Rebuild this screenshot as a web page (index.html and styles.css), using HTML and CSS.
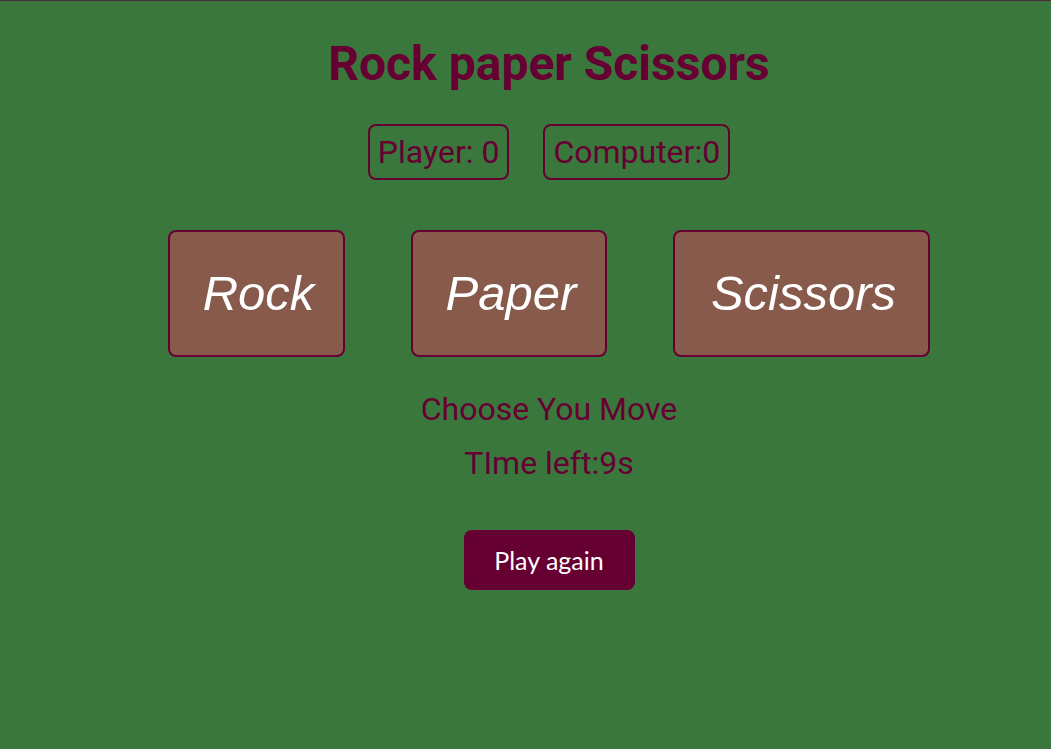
FILE: index.html
```html
<!DOCTYPE html>
<html lang="en">
<head>
<meta charset="utf-8">
<title>Rock paper Scissors</title>
<link rel="stylesheet" href="styles.css">
</head>
<body>
<main class="game">
  <h1 class="title">Rock paper Scissors</h1>
  <div class="scores">
    <div class="score">Player: 0</div>
    <div class="score">Computer:0</div>
  </div>
  <div class="moves">
    <button class="move move-rock">Rock</button>
    <button class="move move-paper">Paper</button>
    <button class="move move-scissors">Scissors</button>
  </div>
  <p class="message">Choose You Move</p>
  <p class="timer">TIme left:9s</p>
  <button class="again">Play again</button>
</main>
</body>
</html>
```

FILE: styles.css
```css
html, body {
  margin: 0;
  padding: 0;
}
body {
  background: #3a773c;
  border-top: 1px solid #4a2a3c;
  min-height: 748px;
  font-family: Roboto, "Liberation Sans", sans-serif;
  color: #660033;
}
.game {
  display: flex;
  flex-direction: column;
  align-items: center;
  padding-left: 47px;
  padding-top: 35px;
}
.title {
  margin: 0;
  font-size: 48px;
  font-weight: 700;
  line-height: 56px;
}
.scores {
  display: flex;
  gap: 34px;
  margin-top: 32px;
}
.score {
  border: 2px solid #660033;
  border-radius: 8px;
  padding: 0 8px;
  font-size: 32px;
  line-height: 52px;
}
.moves {
  display: flex;
  gap: 66px;
  margin-top: 50px;
}
.move {
  box-sizing: border-box;
  height: 127px;
  background: #875a4b;
  border: 2px solid #660033;
  border-radius: 8px;
  padding: 0 0 0 4px;
  font-family: "Liberation Sans", Arial, sans-serif;
  font-style: italic;
  font-size: 49px;
  line-height: 55px;
  color: #ffffff;
}
.move-rock {
  width: 177px;
}
.move-paper {
  width: 196px;
}
.move-scissors {
  width: 257px;
}
.message {
  margin: 33px 0 0;
  font-size: 32px;
  line-height: 38px;
}
.timer {
  margin: 16px 0 0;
  font-size: 32px;
  line-height: 38px;
}
.again {
  margin-top: 48px;
  width: 171px;
  height: 60px;
  background: #660033;
  border: none;
  border-radius: 8px;
  color: #ffffff;
  font-family: Lato, "Open Sans", sans-serif;
  font-size: 25px;
}
```
